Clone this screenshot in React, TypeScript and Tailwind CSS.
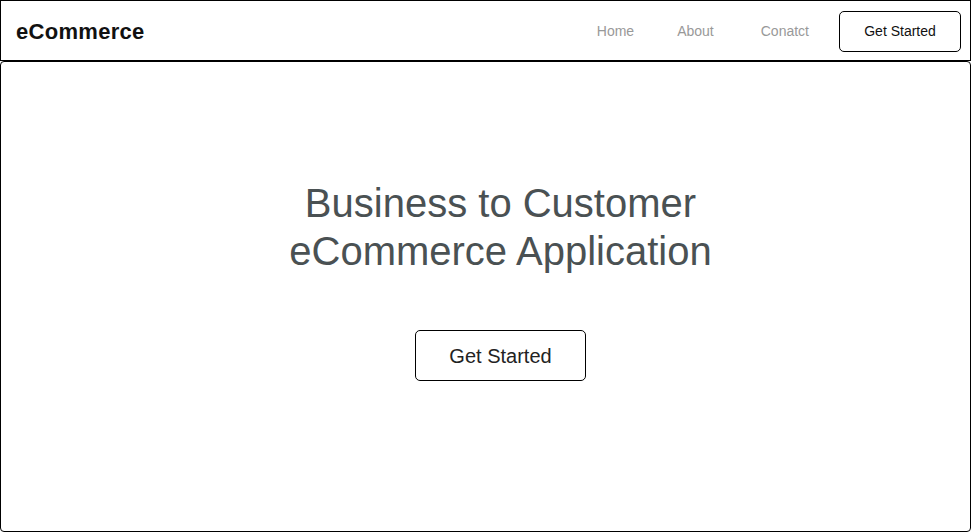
import React from 'react';

const navLinks = ['Home', 'About', 'Conatct'];

const App: React.FC = () => {
  return (
    <div className="w-[972px] h-[532px] bg-white" style={{ fontFamily: '"Liberation Sans", Arial, sans-serif' }}>
      <header className="w-[971px] h-[61px] border border-black flex items-center justify-between pl-[15px] pr-[9px] pt-[1px]">
        <div className="text-[22px] font-bold text-[#111] tracking-[0.3px]">eCommerce</div>
        <nav className="flex items-center">
          <a className="text-[14px] text-[#999] mr-[43px]">{navLinks[0]}</a>
          <a className="text-[14px] text-[#999] mr-[47px]">{navLinks[1]}</a>
          <a className="text-[14px] text-[#999] mr-[30px]">{navLinks[2]}</a>
          <button className="w-[122px] h-[41px] border border-black rounded-[5px] text-[14px] text-[#111]">
            Get Started
          </button>
        </nav>
      </header>
      <main className="w-[971px] h-[471px] border border-black rounded-[4px] flex flex-col items-center pt-[117px] pl-[30px]">
        <h1 className="text-[40px] leading-[48px] text-[#4a5153] text-center">
          Business to Customer
          <br />
          eCommerce Application
        </h1>
        <button className="mt-[55px] w-[171px] h-[51px] border border-black rounded-[5px] text-[20px] text-[#222]">
          Get Started
        </button>
      </main>
    </div>
  );
};

export default App;
